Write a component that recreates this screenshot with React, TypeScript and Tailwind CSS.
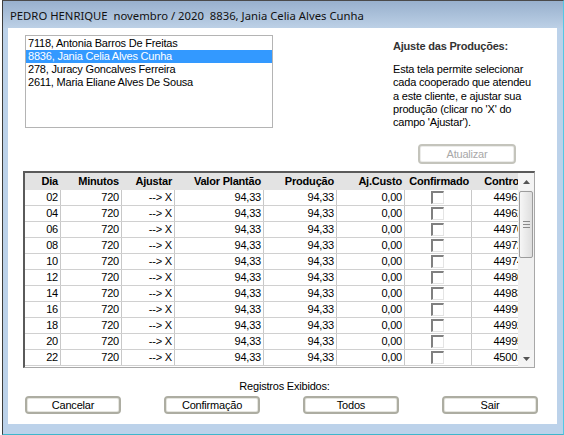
import React from "react";

const cols = [36, 61, 53, 89, 73, 68, 67];

const headers = ["Dia", "Minutos", "Ajustar", "Valor Plantão", "Produção", "Aj.Custo", "Confirmado"];

const rows = [
  ["02", "44961"],
  ["04", "44962"],
  ["06", "44970"],
  ["08", "44972"],
  ["10", "44974"],
  ["12", "44980"],
  ["14", "44983"],
  ["16", "44990"],
  ["18", "44992"],
  ["20", "44995"],
  ["22", "45001"],
];

const cooperados = [
  "7118, Antonia Barros De Freitas",
  "8836, Jania Celia Alves Cunha",
  "278, Juracy Goncalves Ferreira",
  "2611, Maria Eliane Alves De Sousa",
];

const WinButton = ({ label, disabled }: { label: string; disabled?: boolean }) => (
  <button
    type="button"
    className={
      disabled
        ? "w-[98px] h-[20px] rounded-[4px] border-2 border-[#c4c4bc] bg-white shadow-[inset_0_0_0_1px_#ececea] text-[11px] text-[#a8a8a8] leading-none"
        : "w-[96px] h-[18px] rounded-[4px] border-2 border-[#adada2] bg-white shadow-[inset_0_0_0_1px_#e6e6e0] text-[11px] text-black leading-none"
    }
  >
    {label}
  </button>
);

const Checkbox = () => (
  <div className="w-[13px] h-[13px] border-t-2 border-l-2 border-t-[#808080] border-l-[#808080] border-r border-b border-r-[#e4e4e4] border-b-[#e4e4e4] bg-white" />
);

const Arrow = ({ up }: { up?: boolean }) => (
  <svg width="7" height="4" viewBox="0 0 7 4">
    {up ? <polygon points="0,4 7,4 3.5,0" fill="#555" /> : <polygon points="0,0 7,0 3.5,4" fill="#555" />}
  </svg>
);

const App = () => {
  return (
    <div className="w-[564px] h-[435px] flex bg-white font-['Liberation_Sans',Arial,sans-serif] text-black overflow-hidden">
      <div className="w-[2px] shrink-0" />
      <div className="flex-1 flex flex-col border-l border-t border-l-[#3c3c3c] border-t-[#4a4a4a] border-r border-b border-r-[#54c8e4] border-b-[#3fb6cc] bg-[#bcd2ea]">
        {/* title bar */}
        <div className="h-[27px] shrink-0 flex items-center pl-[7px] pt-[3px] bg-gradient-to-b from-[#98b0cd] to-[#bcd0e6]">
          <span className="whitespace-pre text-[11.3px] font-['Noto_Sans',sans-serif] text-[#111]">
            PEDRO HENRIQUE  novembro / 2020  8836, Jania Celia Alves Cunha
          </span>
        </div>

        <div className="flex-1 flex pl-[5px] pr-[6px] pb-[10px]">
          <div className="flex-1 bg-white flex flex-col px-[15px] pt-[7px] text-[11px] tracking-[-0.2px]">
            {/* top section */}
            <div className="h-[124px] shrink-0 flex">
              <div className="ml-[2px] w-[248px] h-[93px] border border-[#b4b4b4] pt-[1px]">
                {cooperados.map((c, i) => (
                  <div
                    key={c}
                    className={
                      i === 1
                        ? "h-[13px] leading-[13px] pl-[2px] bg-[#3399ff] text-white"
                        : "h-[13px] leading-[13px] pl-[2px]"
                    }
                  >
                    {c}
                  </div>
                ))}
              </div>
              <div className="ml-[120px] pt-[5px] flex flex-col">
                <div className="font-bold text-[#333] h-[13px] leading-[13px]">Ajuste das Produções:</div>
                <div className="mt-[10px] leading-[13.3px]">
                  Esta tela permite selecionar
                  <br />
                  cada cooperado que atendeu
                  <br />
                  a este cliente, e ajustar sua
                  <br />
                  produção (clicar no 'X' do
                  <br />
                  campo 'Ajustar').
                </div>
                <div className="mt-[15px] ml-[25px]">
                  <WinButton label="Atualizar" disabled />
                </div>
              </div>
            </div>

            {/* grid */}
            <div className="mt-[12px] w-[512px] h-[197px] shrink-0 flex border-t-2 border-l-2 border-t-[#5a5a5a] border-l-[#5a5a5a] border-r border-b border-r-[#a8a8a8] border-b-[#a8a8a8] overflow-hidden">
              <div className="flex-1 flex flex-col overflow-hidden">
                <div className="h-[17px] shrink-0 flex bg-[#e3e3e3] font-bold">
                  {headers.map((h, i) => (
                    <div
                      key={h}
                      style={{ width: cols[i] }}
                      className="shrink-0 text-right pr-[3px] leading-[17px] whitespace-nowrap"
                    >
                      {h}
                    </div>
                  ))}
                  <div className="w-[53px] shrink-0 text-right pr-[3px] leading-[17px] whitespace-nowrap">Control</div>
                </div>
                {rows.map(([dia, ctrl]) => (
                  <div key={dia} className="h-[16px] shrink-0 flex border-b border-[#d0d0d0]">
                    {[dia, "720", "--> X", "94,33", "94,33", "0,00"].map((v, i) => (
                      <div
                        key={i}
                        style={{ width: cols[i] }}
                        className="shrink-0 text-right pr-[2px] leading-[15px] border-r border-[#c8c8c8]"
                      >
                        {v}
                      </div>
                    ))}
                    <div style={{ width: cols[6] }} className="shrink-0 flex justify-center items-center border-r border-[#c8c8c8]">
                      <div className="-ml-[2px]">
                        <Checkbox />
                      </div>
                    </div>
                    <div className="w-[53px] shrink-0 whitespace-nowrap leading-[15px] text-right pr-[2px]">{ctrl}</div>
                  </div>
                ))}
              </div>
              <div className="w-[16px] shrink-0 flex flex-col bg-[#f0f0f0]">
                <div className="h-[17px] flex items-center justify-center bg-[#f4f4f4]">
                  <Arrow up />
                </div>
                <div className="flex-1 px-[1px] pt-[1px]">
                  <div className="h-[67px] rounded-[2px] border border-[#9c9c9c] bg-gradient-to-r from-[#f6f6f6] to-[#dedede] flex flex-col items-center justify-center gap-[2px]">
                    <div className="w-[7px] h-px bg-[#8a8a8a]" />
                    <div className="w-[7px] h-px bg-[#8a8a8a]" />
                    <div className="w-[7px] h-px bg-[#8a8a8a]" />
                  </div>
                </div>
                <div className="h-[17px] flex items-center justify-center bg-[#f4f4f4]">
                  <Arrow />
                </div>
              </div>
            </div>

            <div className="mt-[12px] text-center pl-[4px] h-[13px] leading-[13px]">Registros Exibidos:</div>
            <div className="mt-[3px] ml-[2px] flex gap-[43px]">
              <WinButton label="Cancelar" />
              <WinButton label="Confirmação" />
              <WinButton label="Todos" />
              <WinButton label="Sair" />
            </div>
          </div>
        </div>
      </div>
    </div>
  );
};

export default App;
